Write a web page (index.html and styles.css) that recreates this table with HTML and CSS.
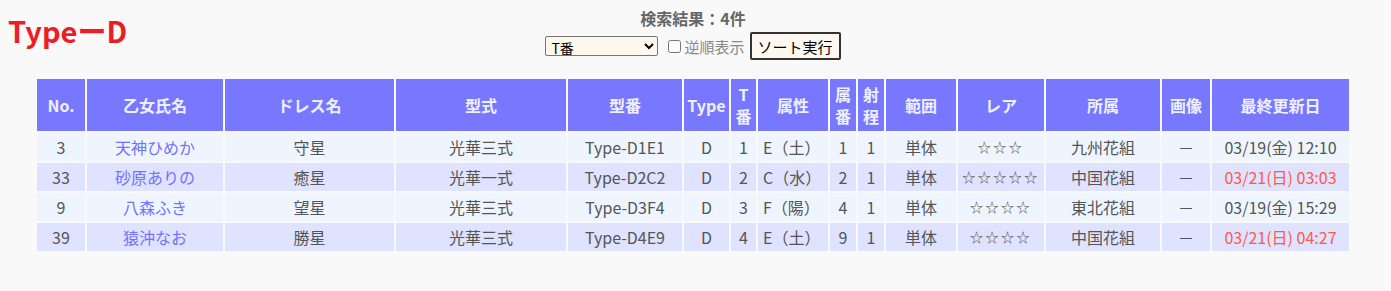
FILE: index.html
```html
<!DOCTYPE html>
<html lang="ja">
<head>
<meta charset="utf-8">
<link rel="stylesheet" href="styles.css">
</head>
<body>
<div class="top">
  <h1 class="title">TypeーD</h1>
  <div class="search">
    <div class="count">検索結果：4件</div>
    <form class="controls">
      <select class="sort-select"><option>T番</option></select>
      <label class="rev"><input type="checkbox" class="chk">逆順表示</label>
      <button type="button" class="btn">ソート実行</button>
    </form>
  </div>
  <div></div>
</div>
<table class="list">
  <colgroup>
    <col class="c-no"><col class="c-name"><col class="c-dress"><col class="c-kata"><col class="c-num"><col class="c-type"><col class="c-t"><col class="c-attr"><col class="c-t2"><col class="c-t3"><col class="c-range"><col class="c-rare"><col class="c-aff"><col class="c-img"><col class="c-date">
  </colgroup>
  <thead>
    <tr><th>No.</th><th>乙女氏名</th><th>ドレス名</th><th>型式</th><th>型番</th><th>Type</th><th>T<br>番</th><th>属性</th><th>属<br>番</th><th>射<br>程</th><th>範囲</th><th>レア</th><th>所属</th><th>画像</th><th>最終更新日</th></tr>
  </thead>
  <tbody>
    <tr><td>3</td><td class="name">天神ひめか</td><td>守星</td><td>光華三式</td><td>Type-D1E1</td><td>D</td><td>1</td><td class="attr">E（土）</td><td>1</td><td>1</td><td>単体</td><td class="star">☆☆☆</td><td>九州花組</td><td>－</td><td>03/19(金) 12:10</td></tr>
    <tr><td>33</td><td class="name">砂原ありの</td><td>癒星</td><td>光華一式</td><td>Type-D2C2</td><td>D</td><td>2</td><td class="attr">C（水）</td><td>2</td><td>1</td><td>単体</td><td class="star">☆☆☆☆☆</td><td>中国花組</td><td>－</td><td class="new">03/21(日) 03:03</td></tr>
    <tr><td>9</td><td class="name">八森ふき</td><td>望星</td><td>光華三式</td><td>Type-D3F4</td><td>D</td><td>3</td><td class="attr">F（陽）</td><td>4</td><td>1</td><td>単体</td><td class="star">☆☆☆☆</td><td>東北花組</td><td>－</td><td>03/19(金) 15:29</td></tr>
    <tr><td>39</td><td class="name">猿沖なお</td><td>勝星</td><td>光華三式</td><td>Type-D4E9</td><td>D</td><td>4</td><td class="attr">E（土）</td><td>9</td><td>1</td><td>単体</td><td class="star">☆☆☆☆</td><td>中国花組</td><td>－</td><td class="new">03/21(日) 04:27</td></tr>
  </tbody>
</table>
</body>
</html>
```
FILE: styles.css
```css
html, body {
  background: #f9f9f9;
}
body {
  margin: 8px 13px 8px 8px;
  font-family: "Noto Sans CJK JP", "Noto Sans", sans-serif;
  color: #555;
  font-size: 16px;
}
.top {
  display: grid;
  grid-template-columns: 1fr auto 1fr;
  align-items: start;
  height: 69px;
}
.title {
  margin: 2px 0 0 0;
  font-size: 29px;
  line-height: 40px;
  font-weight: bold;
  color: #ee1c25;
  font-family: "Noto Sans CJK JP", sans-serif;
  letter-spacing: 0;
}
.search {
  display: flex;
  flex-direction: column;
  align-items: center;
}
.count {
  font-weight: bold;
  color: #666;
  font-size: 16px;
  line-height: 20px;
  margin-top: 0;
}
.controls {
  display: flex;
  align-items: center;
  margin: 4px 0 0 0;
}
.sort-select {
  width: 113px;
  height: 20px;
  font-size: 14px;
  font-family: "Noto Sans CJK JP", sans-serif;
  background: #fff8ef;
  border: 1px solid #767676;
  border-radius: 2px;
  color: #000;
  padding: 0 0 0 1px;
}
.rev {
  display: flex;
  align-items: center;
  color: #888;
  font-size: 15px;
  margin-left: 10px;
}
.chk {
  width: 13px;
  height: 13px;
  margin: 0 3px 0 0;
}
.btn {
  margin-left: 5px;
  height: 28px;
  width: 91px;
  font-size: 15px;
  font-family: "Noto Sans CJK JP", sans-serif;
  color: #000;
  background: #fff8f0;
  border: 2px solid #333;
  border-radius: 2px;
  padding: 0;
}
.list {
  margin: 0 auto;
  border-collapse: separate;
  border-spacing: 2px;
  table-layout: fixed;
  width: 1316px;
}
.c-no { width: 48px; }
.c-name { width: 136px; }
.c-dress { width: 169px; }
.c-kata { width: 170px; }
.c-num { width: 114px; }
.c-type { width: 45px; }
.c-t { width: 25px; }
.c-attr { width: 70px; }
.c-t2 { width: 26px; }
.c-t3 { width: 26px; }
.c-range { width: 70px; }
.c-rare { width: 86px; }
.c-aff { width: 114px; }
.c-img { width: 48px; }
.c-date { width: 137px; }
th {
  background: #7878ff;
  color: #eef0ff;
  font-weight: bold;
  height: 52px;
  padding: 0;
  font-size: 16px;
  line-height: 22px;
  text-align: center;
  vertical-align: middle;
}
td {
  height: 28px;
  padding: 0;
  text-align: center;
  vertical-align: middle;
  font-size: 16px;
  line-height: 20px;
  white-space: nowrap;
  color: #555;
}
tbody tr:nth-child(odd) td { background: #eef5ff; }
tbody tr:nth-child(even) td { background: #dfe3ff; }
td.name { color: #7272ff; }
td.attr { text-align: left; padding-left: 5px; }
td.star { font-size: 13px; letter-spacing: 2.5px; }
td.new { color: #ff5a45; }
```
